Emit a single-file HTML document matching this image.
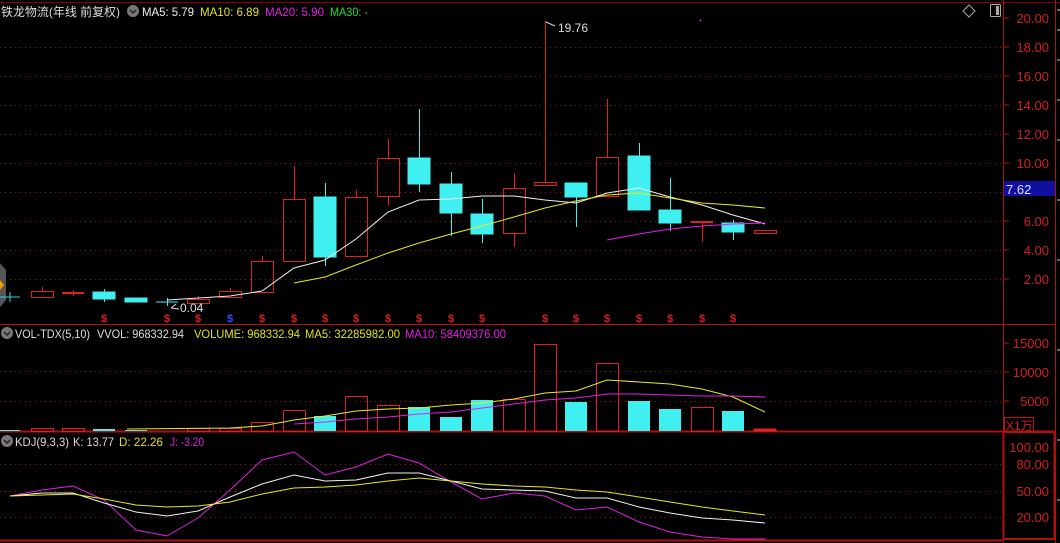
<!DOCTYPE html>
<html><head><meta charset="utf-8"><style>
html,body{margin:0;padding:0;background:#000;width:1060px;height:543px;overflow:hidden}
svg{display:block}
text{font-family:"Liberation Sans","Noto Sans CJK SC",sans-serif}
</style></head><body>
<svg width="1060" height="543" viewBox="0 0 1060 543" xmlns="http://www.w3.org/2000/svg">
<rect width="1060" height="543" fill="#000"/>
<g stroke="#b01010" stroke-width="1" fill="none">
<line x1="0" y1="2.5" x2="1060" y2="2.5" stroke="#800"/>
<line x1="1003.5" y1="0" x2="1003.5" y2="543"/>
<line x1="1055.5" y1="0" x2="1055.5" y2="543"/>
<line x1="0" y1="324.5" x2="1055" y2="324.5"/>
<line x1="0" y1="431.5" x2="1055" y2="431.5" stroke-width="2"/>
<rect x="1003.5" y="432" width="51" height="107" stroke-width="2"/>
<line x1="0" y1="540.5" x2="1003" y2="540.5" stroke-width="2"/>
</g>
<g stroke="#8a1a1a" stroke-dasharray="1,4" stroke-width="1">
<line x1="0" y1="47.5" x2="1003" y2="47.5"/><line x1="0" y1="76.5" x2="1003" y2="76.5"/>
<line x1="0" y1="105.5" x2="1003" y2="105.5"/><line x1="0" y1="134.5" x2="1003" y2="134.5"/>
<line x1="0" y1="163.5" x2="1003" y2="163.5"/><line x1="0" y1="192.5" x2="1003" y2="192.5"/>
<line x1="0" y1="221.5" x2="1003" y2="221.5"/><line x1="0" y1="250.5" x2="1003" y2="250.5"/>
<line x1="0" y1="279.5" x2="1003" y2="279.5"/>
<line x1="0" y1="371.5" x2="1003" y2="371.5"/><line x1="0" y1="401.5" x2="1003" y2="401.5"/>
<line x1="0" y1="464.5" x2="1003" y2="464.5"/><line x1="0" y1="491.5" x2="1003" y2="491.5"/><line x1="0" y1="517.5" x2="1003" y2="517.5"/>
</g>
<g fill="#d02020" font-size="13" text-anchor="end">
<text x="1049" y="23">20.00</text><text x="1049" y="52">18.00</text><text x="1049" y="81">16.00</text>
<text x="1049" y="110">14.00</text><text x="1049" y="139">12.00</text><text x="1049" y="168">10.00</text>
<text x="1049" y="226">6.00</text><text x="1049" y="255">4.00</text><text x="1049" y="284">2.00</text>
<text x="1049" y="348">15000</text><text x="1049" y="377">10000</text><text x="1049" y="406">5000</text>
<text x="1049" y="452">100.00</text><text x="1049" y="469">80.00</text><text x="1049" y="496">50.00</text><text x="1049" y="522">20.00</text>
</g>
<g stroke="#c01010">
<line x1="1004" y1="18" x2="1009" y2="18"/><line x1="1004" y1="47" x2="1009" y2="47"/><line x1="1004" y1="76" x2="1009" y2="76"/><line x1="1004" y1="105" x2="1009" y2="105"/><line x1="1004" y1="134" x2="1009" y2="134"/><line x1="1004" y1="163" x2="1009" y2="163"/><line x1="1004" y1="221" x2="1009" y2="221"/><line x1="1004" y1="250" x2="1009" y2="250"/><line x1="1004" y1="279" x2="1009" y2="279"/>
<line x1="1004" y1="343" x2="1009" y2="343"/><line x1="1004" y1="372" x2="1009" y2="372"/><line x1="1004" y1="401" x2="1009" y2="401"/>
</g>
<rect x="1004" y="181" width="51" height="15" fill="#1010a0"/>
<text x="1006" y="194" fill="#e0e0ff" font-size="13">7.62</text>
<rect x="1004.5" y="417.5" width="29" height="14" fill="none" stroke="#c01010"/>
<text x="1006" y="430" fill="#d02020" font-size="12">X1万</text>
<g stroke="#ccc" stroke-width="1"><line x1="1057" y1="10" x2="1060" y2="10"/><line x1="1057" y1="30" x2="1060" y2="30"/><line x1="1057" y1="60" x2="1060" y2="60"/><line x1="1057" y1="100" x2="1060" y2="100"/><line x1="1057" y1="140" x2="1060" y2="140"/><line x1="1057" y1="200" x2="1060" y2="200"/><line x1="1057" y1="260" x2="1060" y2="260"/><line x1="1057" y1="350" x2="1060" y2="350"/><line x1="1057" y1="440" x2="1060" y2="440"/><line x1="1057" y1="500" x2="1060" y2="500"/></g>
<path d="M969 5 L975 11 L969 17 L963 11 Z" fill="none" stroke="#aaa"/>
<rect x="990.5" y="4.5" width="10" height="12" fill="none" stroke="#aaa" rx="1"/><rect x="996" y="6" width="3" height="9" fill="#aaa"/>
<g font-size="12" lengthAdjust="spacingAndGlyphs">
<text x="1" y="16" fill="#ddd" textLength="119" lengthAdjust="spacingAndGlyphs">铁龙物流(年线 前复权)</text>
<circle cx="133" cy="11" r="6" fill="#777"/><path d="M130 10 L133 13 L136 10" stroke="#222" fill="none" stroke-width="1.5"/>
<text x="142" y="16" fill="#eee" textLength="52" lengthAdjust="spacingAndGlyphs">MA5: 5.79</text>
<text x="200" y="16" fill="#e0e020" textLength="59" lengthAdjust="spacingAndGlyphs">MA10: 6.89</text>
<text x="265" y="16" fill="#e020e0" textLength="59" lengthAdjust="spacingAndGlyphs">MA20: 5.90</text>
<text x="330" y="16" fill="#20e020" textLength="38" lengthAdjust="spacingAndGlyphs">MA30: -</text>
<circle cx="7" cy="333" r="6" fill="#777"/><path d="M4 332 L7 335 L10 332" stroke="#222" fill="none" stroke-width="1.5"/>
<text x="15" y="338" fill="#ddd" textLength="75" lengthAdjust="spacingAndGlyphs">VOL-TDX(5,10)</text>
<text x="97" y="338" fill="#ddd" textLength="87" lengthAdjust="spacingAndGlyphs">VVOL: 968332.94</text>
<text x="194" y="338" fill="#e0e020" textLength="106" lengthAdjust="spacingAndGlyphs">VOLUME: 968332.94</text>
<text x="305" y="338" fill="#e0e020" textLength="95" lengthAdjust="spacingAndGlyphs">MA5: 32285982.00</text>
<text x="405" y="338" fill="#e020e0" textLength="101" lengthAdjust="spacingAndGlyphs">MA10: 58409376.00</text>
<circle cx="7" cy="441" r="6" fill="#777"/><path d="M4 440 L7 443 L10 440" stroke="#222" fill="none" stroke-width="1.5"/>
<text x="15" y="446" fill="#ddd" textLength="54" lengthAdjust="spacingAndGlyphs">KDJ(9,3,3)</text>
<text x="73" y="446" fill="#ddd" textLength="41" lengthAdjust="spacingAndGlyphs">K: 13.77</text>
<text x="119" y="446" fill="#e0e020" textLength="44" lengthAdjust="spacingAndGlyphs">D: 22.26</text>
<text x="170" y="446" fill="#e020e0" textLength="34" lengthAdjust="spacingAndGlyphs">J: -3.20</text>
</g>
<path d="M0 263 L6 270 L6 300 L0 307 Z" fill="#555"/><path d="M0 280 L4 285 L0 290 Z" fill="#f0a000"/>
<g stroke-width="1">
<g stroke="#20e0e0"><line x1="0" y1="297" x2="20" y2="297"/><line x1="10" y1="292" x2="10" y2="302"/></g>
<g stroke="#e02020" fill="none">
<line x1="42.5" y1="287" x2="42.5" y2="291"/><rect x="31.5" y="291.5" width="22" height="6"/>
<line x1="62" y1="293" x2="84" y2="293" stroke-width="2"/><line x1="73.5" y1="290" x2="73.5" y2="296"/>
<rect x="187.5" y="299.5" width="22" height="4"/><line x1="198.5" y1="296" x2="198.5" y2="299"/>
<rect x="219.5" y="291.5" width="22" height="6"/><line x1="230.5" y1="288" x2="230.5" y2="291"/>
<rect x="251.5" y="261.5" width="22" height="31"/><line x1="262.5" y1="256" x2="262.5" y2="261"/>
<rect x="283.5" y="199.5" width="22" height="62"/><line x1="294.5" y1="166" x2="294.5" y2="199"/>
<rect x="345.5" y="197.5" width="22" height="59"/><line x1="356.5" y1="190" x2="356.5" y2="197"/>
<rect x="377.5" y="158.5" width="22" height="38"/><line x1="388.5" y1="139" x2="388.5" y2="158"/><line x1="388.5" y1="197" x2="388.5" y2="206"/>
<rect x="503.5" y="188.5" width="22" height="45"/><line x1="514.5" y1="173" x2="514.5" y2="188"/><line x1="514.5" y1="234" x2="514.5" y2="247"/>
<rect x="534.5" y="182.5" width="22" height="3"/><line x1="545.5" y1="21" x2="545.5" y2="182"/>
<rect x="596.5" y="157.5" width="22" height="39"/><line x1="607.5" y1="99" x2="607.5" y2="157"/>
<line x1="691" y1="222" x2="713" y2="222" stroke-width="2"/><line x1="702.5" y1="222" x2="702.5" y2="242"/>
<rect x="754.5" y="230.5" width="22" height="3"/>
</g>
<g fill="#40f0f0" stroke="#40f0f0">
<rect x="93" y="292" width="22" height="7"/><line x1="104.5" y1="289" x2="104.5" y2="302"/>
<rect x="125" y="298" width="22" height="4"/>
<line x1="156" y1="302" x2="178" y2="302"/><line x1="167.5" y1="298" x2="167.5" y2="306"/>
<rect x="314" y="197" width="22" height="60"/><line x1="325.5" y1="183" x2="325.5" y2="266"/>
<rect x="408" y="158" width="22" height="26"/><line x1="419.5" y1="109" x2="419.5" y2="192"/>
<rect x="440" y="184" width="22" height="29"/><line x1="451.5" y1="172" x2="451.5" y2="236"/>
<rect x="471" y="214" width="22" height="20"/><line x1="482.5" y1="199" x2="482.5" y2="243"/>
<rect x="565" y="183" width="22" height="14"/><line x1="576.5" y1="197" x2="576.5" y2="227"/>
<rect x="628" y="156" width="22" height="54"/><line x1="639.5" y1="143" x2="639.5" y2="156"/>
<rect x="659" y="210" width="22" height="13"/><line x1="670.5" y1="178" x2="670.5" y2="231"/>
<rect x="722" y="223" width="22" height="9"/><line x1="733.5" y1="220" x2="733.5" y2="240"/>
</g>
</g>
<polyline fill="none" stroke="#f0f0f0" points="167,300 230,296 262,291 294,268 325,260 356,239 388,212 419,200 451,199 482,196 514,196 545,200 576,203 607,193 639,188 670,197 702,205 733,215 765,224"/>
<polyline fill="none" stroke="#e8e820" points="294,283 325,277 356,265 388,253 419,243 451,234 482,226 514,217 545,208 576,201 607,195 639,193 670,198 702,203 733,205 765,208"/>
<polyline fill="none" stroke="#e020e0" points="607,240 639,234 670,229 702,226 733,224 765,223"/>
<text x="180" y="312" fill="#ddd" font-size="12">0.04</text><path d="M176 304 L171 308 M171 308 L179 309" stroke="#ddd" fill="none"/>
<text x="558" y="32" fill="#ddd" font-size="12">19.76</text><path d="M546 22 L555 26" stroke="#ddd" fill="none"/>
<circle cx="700.5" cy="20.5" r="1" fill="#e020e0"/>
<g fill="#e02020" font-size="11" font-weight="bold" text-anchor="middle">
<text x="104" y="322">$</text><text x="167" y="322">$</text><text x="198" y="322">$</text><text x="230" y="322" fill="#3050ff">$</text><text x="262" y="322">$</text><text x="294" y="322">$</text><text x="325" y="322">$</text><text x="356" y="322">$</text><text x="388" y="322">$</text><text x="419" y="322">$</text><text x="451" y="322">$</text><text x="482" y="322">$</text><text x="545" y="322">$</text><text x="576" y="322">$</text><text x="607" y="322">$</text><text x="639" y="322">$</text><text x="670" y="322">$</text><text x="702" y="322">$</text><text x="733" y="322">$</text>
</g>
<g stroke="#e02020" fill="none">
<rect x="31.5" y="428.5" width="22" height="3"/><rect x="62.5" y="428.5" width="22" height="3"/>
<rect x="187.5" y="428.5" width="22" height="3"/><rect x="219.5" y="428.5" width="22" height="3"/>
<rect x="251.5" y="422.5" width="22" height="9"/><rect x="283.5" y="410.5" width="22" height="21"/>
<rect x="345.5" y="396.5" width="22" height="35"/><rect x="377.5" y="405.5" width="22" height="26"/>
<rect x="503.5" y="399.5" width="22" height="32"/><rect x="534.5" y="344.5" width="22" height="87"/>
<rect x="596.5" y="363.5" width="22" height="68"/><rect x="691.5" y="407.5" width="22" height="24"/>
<rect x="754" y="429" width="22" height="2" fill="#e02020"/>
</g>
<g fill="#40f0f0">
<rect x="0" y="430" width="20" height="1"/><rect x="93" y="429" width="22" height="2"/><rect x="125" y="430" width="22" height="1"/>
<rect x="314" y="416" width="22" height="15"/><rect x="408" y="407" width="22" height="24"/>
<rect x="440" y="417" width="22" height="14"/><rect x="471" y="400" width="22" height="31"/>
<rect x="565" y="402" width="22" height="29"/><rect x="628" y="401" width="22" height="30"/>
<rect x="659" y="409" width="22" height="22"/><rect x="722" y="411" width="22" height="20"/>
</g>
<polyline fill="none" stroke="#e8e820" points="127,429 230,428 262,426 294,420 325,416 356,411 388,409 419,408 451,405 482,403 514,399 545,393 576,391 607,380 639,382 670,384 702,389 733,397 765,412"/>
<polyline fill="none" stroke="#e020e0" points="294,424 325,422 356,419 388,417 419,414 451,412 482,408 514,404 545,400 576,398 607,394 639,394 670,395 702,396 733,396 765,397"/>
<polyline fill="none" stroke="#e020e0" points="10,496 42,490 73,486 104,500 136,530 167,536 198,518 230,490 262,460 294,452 325,475 356,467 388,454 419,463 451,482 482,499 514,493 545,496 576,510 607,507 639,522 670,532 702,537 733,539 765,539"/>
<polyline fill="none" stroke="#f0f0f0" points="10,496 42,493 73,493 104,503 136,512 167,516 198,511 230,497 262,484 294,475 325,481 356,480 388,473 419,473 451,481 482,489 514,490 545,491 576,498 607,498 639,507 670,513 702,518 733,520 765,523"/>
<polyline fill="none" stroke="#e8e820" points="10,496 42,495 73,494 104,499 136,505 167,507 198,506 230,502 262,494 294,488 325,487 356,485 388,481 419,478 451,481 482,484 514,486 545,487 576,490 607,492 639,497 670,502 702,507 733,511 765,515"/>
</svg>
</body></html>
